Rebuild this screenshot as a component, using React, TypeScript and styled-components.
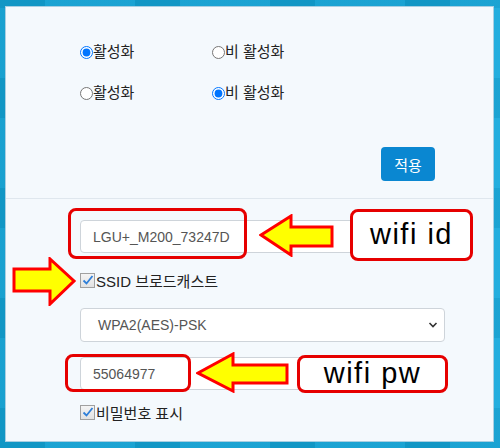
import React from "react";
import styled, { createGlobalStyle } from "styled-components";

const Global = createGlobalStyle`
  html, body { margin: 0; padding: 0; }
  body { width: 500px; height: 448px; overflow: hidden; font-family: "Liberation Sans", "Noto Sans CJK KR", sans-serif; }
`;

const Frame = styled.div`
  width: 500px;
  height: 448px;
  box-sizing: border-box;
  padding: 6px 6px 6px 5px;
  background:
    repeating-linear-gradient(90deg, rgba(0,0,0,0.06) 0 45px, rgba(255,255,255,0.04) 45px 135px),
    repeating-linear-gradient(0deg, rgba(0,0,0,0.05) 0 40px, rgba(255,255,255,0.03) 40px 110px),
    #13a8dc;
`;

const Panel = styled.div`
  height: 100%;
  box-sizing: border-box;
  background: #f4f9fd;
  border: 1px solid #a9cfe2;
  display: flex;
  flex-direction: column;
`;

const TopSection = styled.section`
  height: 192px;
  box-sizing: border-box;
  padding: 35px 58px 0 74px;
  border-bottom: 1px solid #dfe7ee;
  display: flex;
  flex-direction: column;
`;

const RadioRow = styled.div`
  display: flex;
  height: 20px;
  align-items: center;
  & + & { margin-top: 21px; }
`;

const RadioLabel = styled.label`
  width: 132px;
  display: flex;
  align-items: center;
  font-size: 15px;
  line-height: 20px;
  color: #222;
`;

const Radio = styled.input`
  width: 13px;
  height: 13px;
  margin: 0 0 0 0;
`;

const ButtonRow = styled.div`
  display: flex;
  justify-content: flex-end;
  margin-top: 44px;
`;

const ApplyButton = styled.button`
  width: 54px;
  height: 34px;
  border: none;
  border-radius: 4px;
  background: #0a87d1;
  color: #fff;
  font-size: 15px;
  font-family: "Noto Sans CJK KR", sans-serif;
  padding: 0;
`;

const BottomSection = styled.section`
  position: relative;
  flex: 1;
  padding: 21px 48px 0 74px;
  display: flex;
  flex-direction: column;
`;

const TextInput = styled.input<{ $mt?: number }>`
  width: 365px;
  height: 33px;
  box-sizing: border-box;
  margin-top: ${p => p.$mt ?? 0}px;
  border: 1px solid #ced4da;
  border-radius: 4px;
  background: #fff;
  padding: 0 12px;
  font-family: "Liberation Sans", sans-serif;
  font-size: 14px;
  color: #555;
  outline: none;
`;

const Select = styled.div`
  width: 365px;
  height: 34px;
  box-sizing: border-box;
  border: 1px solid #ced4da;
  border-radius: 4px;
  background: #fff;
  padding: 0 6px 0 17px;
  display: flex;
  align-items: center;
  justify-content: space-between;
  font-size: 14px;
  color: #555;
`;

const CheckRow = styled.label<{ $mt: number; $mb: number }>`
  display: flex;
  align-items: center;
  height: 20px;
  margin: ${p => p.$mt}px 0 ${p => p.$mb}px 0;
  font-size: 15px;
  color: #222;
`;

const CheckBox = styled.span`
  width: 15px;
  height: 15px;
  box-sizing: border-box;
  border: 1px solid #a0a0a0;
  background: linear-gradient(#f4f4f4, #e2e2e2);
  display: inline-flex;
  align-items: center;
  justify-content: center;
  margin-right: 1px;
`;

const Overlay = styled.div<{ $l: number; $t: number; $w: number; $h: number }>`
  position: absolute;
  left: ${p => p.$l}px;
  top: ${p => p.$t}px;
  width: ${p => p.$w}px;
  height: ${p => p.$h}px;
`;

const RedBox = styled(Overlay)`
  box-sizing: border-box;
  border: 3px solid #e60000;
  border-radius: 8px;
`;

const LabelBox = styled(RedBox)`
  background: #fff;
  display: flex;
  align-items: center;
  justify-content: center;
  font-family: "Liberation Sans", sans-serif;
  font-size: 29px;
  letter-spacing: 1.5px;
  color: #000;
  padding-bottom: 2px;
`;

const Check = () => (
  <CheckBox>
    <svg width="12" height="12" viewBox="0 0 12 12">
      <path d="M1.5 6.5 L4.5 9.5 L10.5 2" fill="none" stroke="#2f7fd8" strokeWidth="1.8" />
    </svg>
  </CheckBox>
);

const Arrow = ({ w, h, points }: { w: number; h: number; points: string }) => (
  <svg width={w} height={h} viewBox={`0 0 ${w} ${h}`}>
    <polygon points={points} fill="#ffff00" stroke="#ff0000" strokeWidth="3" strokeLinejoin="miter" />
  </svg>
);

export default function App() {
  return (
    <>
      <Global />
      <Frame>
        <Panel>
          <TopSection>
            <RadioRow>
              <RadioLabel><Radio type="radio" name="a" defaultChecked />활성화</RadioLabel>
              <RadioLabel><Radio type="radio" name="a" />비 활성화</RadioLabel>
            </RadioRow>
            <RadioRow>
              <RadioLabel><Radio type="radio" name="b" />활성화</RadioLabel>
              <RadioLabel><Radio type="radio" name="b" defaultChecked />비 활성화</RadioLabel>
            </RadioRow>
            <ButtonRow>
              <ApplyButton>적용</ApplyButton>
            </ButtonRow>
          </TopSection>
          <BottomSection>
            <TextInput defaultValue="LGU+_M200_73247D" />
            <CheckRow $mt={17} $mb={18}><Check />SSID 브로드캐스트</CheckRow>
            <Select>
              <span>WPA2(AES)-PSK</span>
              <svg width="10" height="8" viewBox="0 0 10 8">
                <path d="M1.5 2 L5 5.5 L8.5 2" fill="none" stroke="#333" strokeWidth="1.6" />
              </svg>
            </Select>
            <TextInput defaultValue="55064977" $mt={15} />
            <CheckRow $mt={12} $mb={0}><Check />비밀번호 표시</CheckRow>

            <RedBox $l={62} $t={9} $w={179} $h={51} />
            <Overlay $l={253} $t={15} $w={75} $h={43}>
              <Arrow w={75} h={43} points="2,21 32,2 32,13 73,13 73,32 32,32 32,41" />
            </Overlay>
            <LabelBox $l={344} $t={10} $w={123} $h={52}>wifi id</LabelBox>

            <Overlay $l={6} $t={58} $w={65} $h={49}>
              <Arrow w={65} h={49} points="2,12 38,12 38,2 62,24 38,47 38,34 2,34" />
            </Overlay>

            <RedBox $l={59} $t={155} $w={126} $h={38} />
            <Overlay $l={190} $t={153} $w={93} $h={41}>
              <Arrow w={93} h={41} points="2,21 37,2 37,13 91,13 91,31 37,31 37,39" />
            </Overlay>
            <LabelBox $l={291} $t={156} $w={151} $h={38}>wifi pw</LabelBox>
          </BottomSection>
        </Panel>
      </Frame>
    </>
  );
}
